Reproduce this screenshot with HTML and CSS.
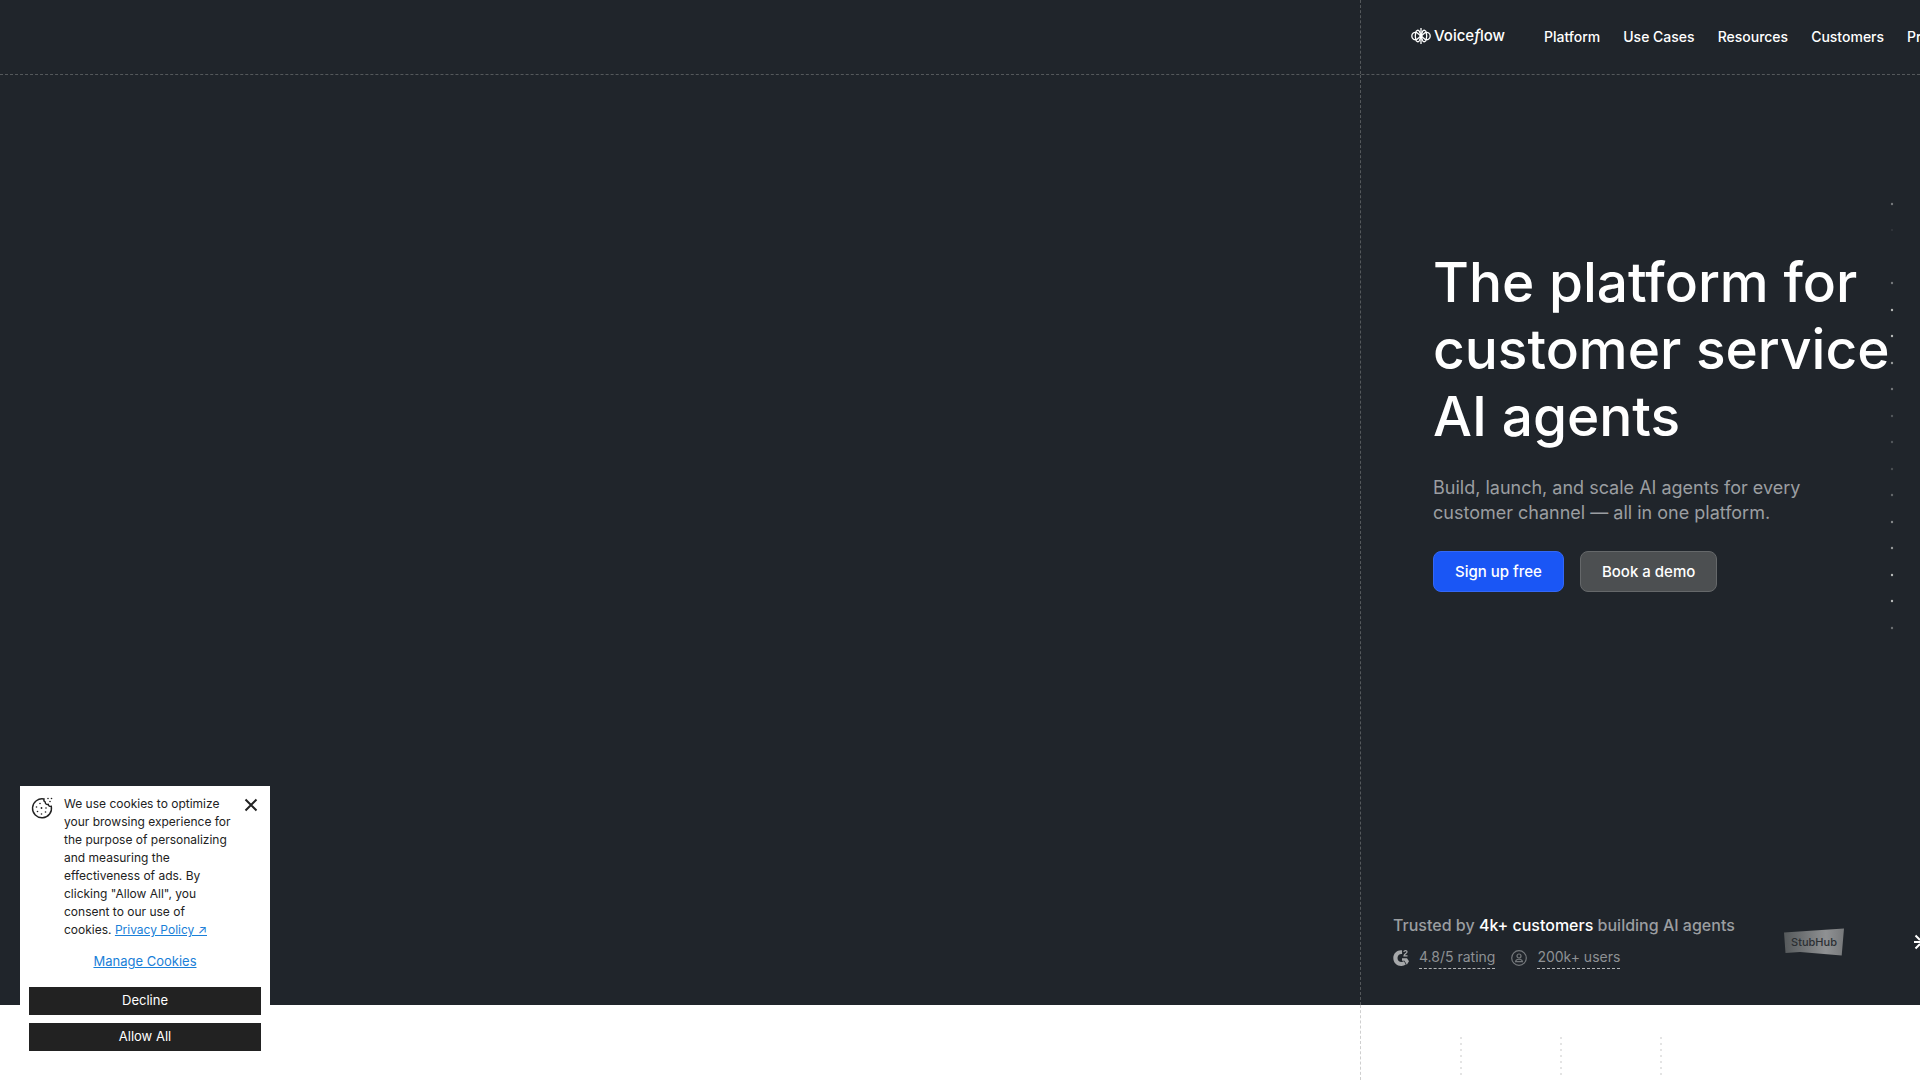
FILE: index.html
```html
<!DOCTYPE html>
<html lang="en">
<head>
  <meta charset="UTF-8">
  <meta name="viewport" content="width=device-width, initial-scale=1.0">
  <title>Voiceflow</title>
  <link rel="stylesheet" href="styles.css">
</head>
<body>
  <div class="top">
    <header class="row header">
      <div class="column header-inner">
        <a class="logo" href="#" aria-label="Voiceflow">
          <svg width="20" height="18" viewBox="0 0 20 18" fill="none" stroke="#fff" stroke-width="1.300">
            <path d="M10 1v16"/>
            <path d="M10 9C8.500 8 5.500 5 5.500 5.500 3 4.800.8 6.500.8 9s2.200 4.200 4.700 3.500C5.500 13 8.500 10 10 9zM10 9c1.500-1 4.500-4 4.500-3.500C17 4.800 19.200 6.500 19.200 9s-2.200 4.200-4.700 3.500C14.500 13 11.500 10 10 9z"/>
            <path d="M10 9L8.500 4.500C7.500 2.500 5 3 4.800 5.500 4.600 7 4.300 8 4.300 9s.3 2 .5 3.500c.2 2.500 2.700 3 3.700 1zM10 9l1.500-4.500C12.500 2.500 15 3 15.200 5.500c.2 1.500.5 2.500.5 3.500s-.3 2-.5 3.500c-.2 2.500-2.700 3-3.700 1z"/>
            <circle cx="10" cy="9" r="1.600" fill="#fff" stroke="none"/>
          </svg>
          <span>Voice<i>f</i>low</span>
        </a>
        <nav class="nav">
          <a href="#">Platform</a>
          <a href="#">Use Cases</a>
          <a href="#">Resources</a>
          <a href="#">Customers</a>
          <a href="#">Pricing</a>
        </nav>
      </div>
    </header>

    <main class="row hero">
      <div class="column hero-inner">
        <div class="hero-main">
          <div class="copy">
            <h1>The platform for<br>customer service<br>AI agents</h1>
            <p>Build, launch, and scale AI agents for every<br>customer channel — all in one platform.</p>
            <div class="actions">
              <button class="btn btn-primary" type="button">Sign up free</button>
              <button class="btn btn-ghost" type="button">Book a demo</button>
            </div>
          </div>
          <svg class="dots" width="4" height="430" viewBox="0 0 4 430" fill="#c8cbc9">
            <circle cx="2" cy="2" r="1.200" opacity=".5"/>
            <circle cx="2" cy="28" r="1" opacity=".12"/>
            <circle cx="2" cy="81" r="1.200" opacity=".5"/>
            <circle cx="2" cy="108" r="1.200" opacity=".9"/>
            <circle cx="2" cy="134" r="1.200" opacity=".9"/>
            <circle cx="2" cy="161" r="1.200" opacity=".7"/>
            <circle cx="2" cy="187" r="1.200" opacity=".5"/>
            <circle cx="2" cy="214" r="1.200" opacity=".3"/>
            <circle cx="2" cy="240" r="1.200" opacity=".3"/>
            <circle cx="2" cy="267" r="1.200" opacity=".25"/>
            <circle cx="2" cy="293" r="1.200" opacity=".4"/>
            <circle cx="2" cy="320" r="1.200" opacity=".6"/>
            <circle cx="2" cy="346" r="1.200" opacity=".7"/>
            <circle cx="2" cy="373" r="1.200" opacity=".9"/>
            <circle cx="2" cy="399" r="1.200" opacity=".9"/>
            <circle cx="2" cy="426" r="1.200" opacity=".45"/>
          </svg>
        </div>

        <div class="trust">
          <div class="trust-text">
            <p>Trusted by <strong>4k+ customers</strong> building AI agents</p>
            <div class="stats">
              <svg width="16" height="18" viewBox="0 0 16 18">
                <path d="M9 1.200C4.500.6.300 4 .300 9s4 8.300 8.300 8c1.600-.1 3-.6 4.200-1.500L11 12.300c-3 2-6.500 0-6.500-3.300 0-2.600 2-4.300 4.600-4z" fill="#a6a8aa"/>
                <path d="M9 9.300h5l2 3-2.200 3.500-2.300-4H9z" fill="#a6a8aa"/>
                <path d="M10.800 3c.3-2 3.400-1.800 3.200 0-.1 1.300-2.800 2-3 3.800h3.500" fill="none" stroke="#a6a8aa" stroke-width="1.200"/>
              </svg>
              <a href="#">4.8/5 rating</a>
              <svg width="16" height="18" viewBox="0 0 16 18" fill="none" stroke="#74787b" stroke-width="1.200">
                <circle cx="8" cy="9" r="7.300"/>
                <circle cx="8" cy="7" r="2"/>
                <path d="M4.500 12.700c.4-3.300 6.600-3.300 7 0z"/>
              </svg>
              <a href="#">200k+ users</a>
            </div>
          </div>
          <svg class="stubhub" width="60" height="28" viewBox="0 0 60 28">
            <defs>
              <linearGradient id="plate" x1="0" x2="1">
                <stop offset="0" stop-color="#55595b"/>
                <stop offset=".7" stop-color="#8f9193"/>
                <stop offset="1" stop-color="#77797b"/>
              </linearGradient>
            </defs>
            <path d="M0 4.500L60 .5l-2.300 27L16 24 1.500 25z" fill="url(#plate)"/>
            <text x="30" y="18" text-anchor="middle" font-family="Inter, sans-serif" font-size="11" font-weight="500" fill="#2b2f33">StubHub</text>
          </svg>
          <svg class="spark" width="16" height="16" viewBox="0 0 16 16" stroke="#fff" stroke-width="2">
            <path d="M8 0v6M8 10v6M0 8h6M10 8h6M1.500 1.500l4.500 4.500M10 10l4.500 4.500M14.500 1.500L10 6M6 10l-4.500 4.500"/>
          </svg>
        </div>
      </div>
    </main>
  </div>

  <section class="row next">
    <div class="column next-inner">
      <span class="rail"></span>
      <span class="rail"></span>
      <span class="rail"></span>
    </div>
  </section>

  <aside class="cookies">
    <div class="cookies-top">
      <svg class="cookie-icon" width="22" height="22" viewBox="0 0 22 22" fill="none" stroke="#222" stroke-width="1.400">
        <path d="M13 2A9.500 9.500 0 1 0 20.300 9.300c-1.500.4-2.900-.3-3-1.900-1.900.3-3.200-.7-3-2.300C13.200 4.600 12.600 3.300 13 2z"/>
        <g fill="#222" stroke="none">
          <circle cx="9" cy="6.500" r=".8"/>
          <circle cx="5.500" cy="10" r=".8"/>
          <circle cx="10.500" cy="11" r=".9"/>
          <circle cx="15" cy="11" r=".8"/>
          <circle cx="6.500" cy="14.500" r=".8"/>
          <circle cx="10.500" cy="17" r=".8"/>
          <circle cx="14.500" cy="15" r=".8"/>
          <circle cx="17" cy="1.500" r=".8"/>
          <circle cx="20.500" cy="1.500" r=".8"/>
          <circle cx="19" cy="4.500" r=".8"/>
        </g>
      </svg>
      <p>We use cookies to optimize<br>your browsing experience for<br>the purpose of personalizing<br>and measuring the<br>effectiveness of ads. By<br>clicking "Allow All", you<br>consent to our use of<br>cookies. <a href="#">Privacy Policy ↗</a></p>
      <button class="close" type="button" aria-label="Close">
        <svg width="14" height="14" viewBox="0 0 14 14" stroke="#222" stroke-width="2">
          <path d="M1.500 1.500l11 11M12.500 1.500l-11 11"/>
        </svg>
      </button>
    </div>
    <a class="manage" href="#">Manage Cookies</a>
    <button class="choice" type="button">Decline</button>
    <button class="choice" type="button">Allow All</button>
  </aside>
</body>
</html>
```
FILE: styles.css
```css
* {
  box-sizing: border-box;
}

body {
  margin: 0;
  min-height: 100vh;
  display: flex;
  flex-direction: column;
  overflow: hidden;
  font-family: Inter, "Liberation Sans", sans-serif;
  background-color: #ffffff;
}

h1,
p {
  margin: 0;
}

.top {
  background-color: #20252b;
  color: #ffffff;
}

/* page content sits in the right hand column of every row */
.row {
  display: grid;
  grid-template-columns: minmax(0, 17fr) minmax(0, 7fr);
}

.column {
  grid-column: 2;
  border-left: 1px dashed #54585b;
  white-space: nowrap;
}

/* Header */
.header {
  border-bottom: 1px dashed #54585b;
}

.header-inner {
  display: flex;
  align-items: center;
  gap: 39px;
  height: 74px;
  padding-left: 50px;
}

.logo {
  display: flex;
  align-items: center;
  gap: 3px;
  padding-bottom: 3px;
  color: #ffffff;
  font-size: 15px;
  font-weight: 500;
  line-height: 18px;
  text-decoration: none;
}

.nav {
  display: flex;
  gap: 23px;
}

.nav a {
  color: #ffffff;
  font-size: 14px;
  font-weight: 500;
  line-height: 20px;
  text-decoration: none;
}

/* Hero */
.hero-main {
  display: flex;
  justify-content: space-between;
  padding: 127px 26px 0 72px;
}

.copy {
  padding-top: 47px;
}

.dots {
  flex: none;
}

h1 {
  font-size: 55px;
  font-weight: 500;
  line-height: 67px;
}

.copy p {
  margin-top: 25px;
  color: #9b9ea1;
  font-size: 18px;
  line-height: 25px;
}

.actions {
  display: flex;
  gap: 16px;
  margin-top: 26px;
}

.btn {
  height: 41px;
  padding: 0 21px;
  border-radius: 8px;
  color: #ffffff;
  font-family: inherit;
  font-size: 15px;
  font-weight: 500;
  cursor: pointer;
}

.btn-primary {
  background-color: #1a56f5;
  border: 1px solid #3468f5;
}

.btn-ghost {
  background-color: #4c4f51;
  border: 1px solid #65686a;
}

.trust {
  display: flex;
  align-items: center;
  padding: 283px 0 36px 32px;
  overflow: hidden;
}

.trust svg {
  flex: none;
}

.trust-text p {
  color: #9b9ea1;
  font-size: 16px;
  font-weight: 500;
  line-height: 20px;
}

.trust-text strong {
  color: #ffffff;
  font-weight: 500;
}

.stats {
  display: flex;
  align-items: center;
  gap: 10px;
  margin-top: 11px;
}

.stats a {
  margin-right: 6px;
  border-bottom: 1px dashed #b0b2b4;
  color: #8e9194;
  font-size: 14px;
  line-height: 22px;
  text-decoration: none;
}

.stubhub {
  margin-left: 49px;
}

.spark {
  margin-left: 70px;
}

/* Section below the fold */
.next {
  flex: 1;
}

.next-inner {
  display: grid;
  grid-template-columns: repeat(3, 100px);
  padding: 32px 0 0 1px;
  border-left-color: #cfcfcf;
}

.rail {
  height: 42px;
  background: repeating-linear-gradient(#e4e4e4 0 2px, transparent 2px 6px) right / 2px 100% no-repeat;
}

/* Cookie banner */
.cookies {
  position: fixed;
  left: 20px;
  bottom: 20px;
  display: flex;
  flex-direction: column;
  width: 250px;
  padding: 9px;
  background-color: #ffffff;
  color: #222222;
}

.cookies-top {
  display: flex;
  align-items: flex-start;
}

.cookie-icon {
  flex: none;
  margin: 2px 11px 0 2px;
}

.cookies p {
  flex: 1;
  font-size: 12px;
  line-height: 18px;
  white-space: nowrap;
}

.cookies a {
  color: #1a7fd8;
}

.close {
  flex: none;
  margin: 3px 3px 0 0;
  padding: 0;
  border: none;
  background: none;
  line-height: 0;
  cursor: pointer;
}

.manage {
  margin: 13px 0 17px;
  font-size: 13px;
  line-height: 18px;
  text-align: center;
}

.choice {
  height: 28px;
  padding: 0 0 3px;
  border: none;
  background-color: #222222;
  color: #ffffff;
  font-family: inherit;
  font-size: 13px;
  cursor: pointer;
}

.choice + .choice {
  margin-top: 8px;
}
```
